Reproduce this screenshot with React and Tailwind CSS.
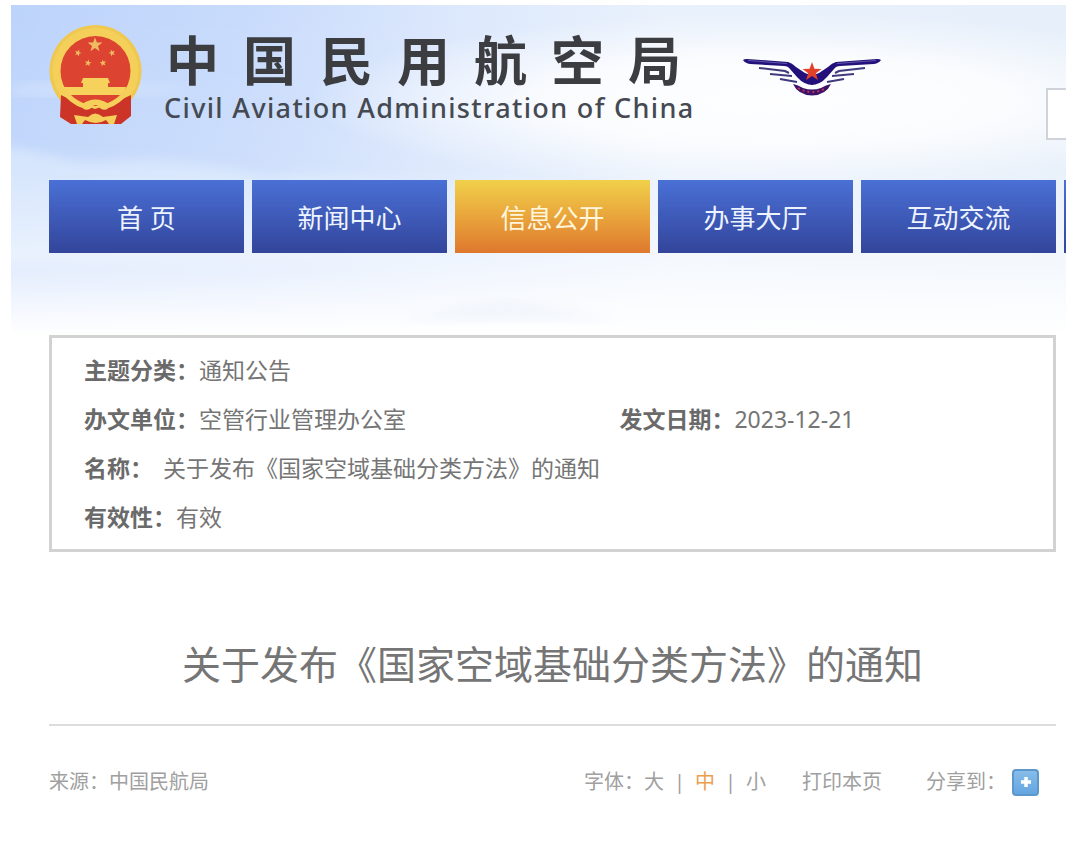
import { useState } from "react";

const navItems = [
  { label: "首 页" },
  { label: "新闻中心" },
  { label: "信息公开", active: true },
  { label: "办事大厅" },
  { label: "互动交流" },
];

const sizes = ["大", "中", "小"];

const noticeTitle = "关于发布《国家空域基础分类方法》的通知";

const star = "0,-10 2.4,-3.2 9.5,-3.1 3.8,1.2 5.9,8.1 0,4 -5.9,8.1 -3.8,1.2 -9.5,-3.1 -2.4,-3.2";

function SkyBackground() {
  return (
    <svg
      className="absolute inset-0 h-full w-full"
      viewBox="0 0 1055 332"
      preserveAspectRatio="none"
      aria-hidden="true"
    >
      <defs>
        <linearGradient id="sky" x1="0" y1="0" x2="1" y2="0">
          <stop offset="0" stopColor="#bcd3fb" />
          <stop offset="0.22" stopColor="#c8dbfc" />
          <stop offset="0.42" stopColor="#dce8fc" />
          <stop offset="0.62" stopColor="#e9f1fc" />
          <stop offset="1" stopColor="#e6effa" />
        </linearGradient>
        <linearGradient id="fade" x1="0" y1="0" x2="0" y2="1">
          <stop offset="0" stopColor="#fff" stopOpacity="0" />
          <stop offset="0.5" stopColor="#fff" stopOpacity="0.1" />
          <stop offset="0.78" stopColor="#fff" stopOpacity="0.55" />
          <stop offset="1" stopColor="#fff" />
        </linearGradient>
        <radialGradient id="glow">
          <stop offset="0" stopColor="#fff" stopOpacity="0.95" />
          <stop offset="0.5" stopColor="#fff" stopOpacity="0.8" />
          <stop offset="1" stopColor="#fff" stopOpacity="0" />
        </radialGradient>
        <filter id="soft">
          <feGaussianBlur stdDeviation="6" />
        </filter>
      </defs>
      <rect width="1055" height="332" fill="url(#sky)" />
      <ellipse cx="770" cy="96" rx="470" ry="88" fill="url(#glow)" />
      <path
        d="M-20 142 C20 142 50 158 92 158 C140 152 200 160 260 172 C340 168 400 176 480 190 L480 260 L-20 260Z"
        fill="#dceafd"
        opacity="0.7"
        filter="url(#soft)"
      />
      <path d="M0 82 Q70 72 190 84 Q90 96 0 90Z" fill="#d8e6fd" opacity="0.6" filter="url(#soft)" />
      <rect width="1055" height="332" fill="url(#fade)" />
      <path d="M390 318 Q440 300 500 296 Q560 306 610 318Z" fill="#edf3fb" opacity="0.6" filter="url(#soft)" />
    </svg>
  );
}

function Emblem() {
  return (
    <svg className="h-[100px] w-[93px] shrink-0" viewBox="0 0 93 100" role="img" aria-label="国徽">
      <circle cx="46.5" cy="46" r="46" fill="#efc850" />
      <circle cx="46.5" cy="46" r="43" fill="#f4d05a" />
      <path d="M12 70 L28 78 L46 84 L65 78 L82 70 L82 91 L72 99 H22 L11 92Z" fill="#cb3426" />
      <circle cx="46.5" cy="46" r="35" fill="#dc4330" />
      <g fill="#f0bc62">
        <polygon points={star} transform="translate(46 20) scale(0.78)" />
        <polygon points={star} transform="translate(29 28) rotate(20) scale(0.36)" />
        <polygon points={star} transform="translate(63 28) rotate(-20) scale(0.36)" />
        <polygon points={star} transform="translate(39 38) rotate(10) scale(0.36)" />
        <polygon points={star} transform="translate(54 38) rotate(-10) scale(0.36)" />
      </g>
      <path d="M34 53 H59 L61 58 H59 V62 H77 L75 70 H17 L15 62 H34 V58 H32Z" fill="#f6d25c" />
      <path
        d="M15 66 Q23 77 35 81 Q40 77 46.5 77 Q53 77 58 81 Q70 77 78 66"
        fill="none"
        stroke="#f5cf59"
        strokeWidth="5"
      />
      <path d="M35 82 Q39 84 42 80 Q46.5 76 51 80 Q54 84 58 82" fill="none" stroke="#f5cf59" strokeWidth="4" />
      <path
        d="M25 90 L39 92 Q46 85 54 92 L68 90 L65 99 H60 L57 95 Q47 101 36 95 L33 99 H28Z"
        fill="#f5cf59"
      />
    </svg>
  );
}

function Wings() {
  return (
    <svg className="h-[39px] w-[138px]" viewBox="0 0 138 39" role="img" aria-label="民航徽标">
      <path d="M50 26 Q55 27 60 30 Q69 33 78 30 Q83 27 88 26 Q83 37 69 37.5 Q55 37 50 26Z" fill="#3a1268" />
      <path d="M55 30 Q69 38 83 30" fill="none" stroke="#c0305a" strokeWidth="2" strokeDasharray="2 3" />
      {["", "translate(138 0) scale(-1 1)"].map((flip) => (
        <g key={flip} transform={flip}>
          <path
            d="M0 2 Q1 1 4 1 L45 4 Q49 5 53 9 L62 15 L70 18 V27 Q61 27 54 19 L47 11 Q45 8 41 8 L7 6 Q2 5 0 2Z"
            fill="#23107a"
          />
          <path d="M5 2.500 L44 5.500" fill="none" stroke="#6f6ab8" strokeWidth="0.8" />
          <g fill="none" stroke="#3f3a7c" strokeWidth="2">
            <path d="M16 10 L42 13 L46 15" />
            <path d="M27 16 L49 18" />
            <path d="M37 21 L54 24" />
          </g>
        </g>
      ))}
      <polygon points={star} transform="translate(69 14)" fill="#e2402b" />
    </svg>
  );
}

function InfoItem({ label, children, className = "" }) {
  return (
    <div className={`flex ${className}`}>
      <dt className="shrink-0 font-bold text-[#6a6a6a]">{label}：</dt>
      <dd>{children}</dd>
    </div>
  );
}

export default function App() {
  const [fontSize, setFontSize] = useState("中");

  return (
    <div className="bg-white pt-[5px] pr-3.5 pl-[11px] font-['Noto_Sans','Noto_Sans_CJK_SC',sans-serif] text-[#757575]">
      <header className="relative overflow-hidden pb-[82px] pl-[38px]">
        <SkyBackground />
        <div className="relative flex h-[175px] items-start pt-5">
          <Emblem />
          <div className="ml-[22px] pt-2">
            <h1 className="flex gap-6 pl-0.5 font-['Liberation_Sans','Noto_Sans_CJK_SC',sans-serif] text-[53px] leading-[60px] font-bold text-[#3b3d41]">
              {"中国民用航空局".split("").map((char) => (
                <span key={char}>{char}</span>
              ))}
            </h1>
            <p className="text-[27px] leading-[30px] font-medium tracking-wider whitespace-nowrap text-[#454a52]">
              Civil Aviation Administration of China
            </p>
          </div>
          <div className="mt-[33px] ml-12 shrink-0">
            <Wings />
          </div>
          <input
            type="text"
            aria-label="搜索"
            className="mt-[63px] ml-auto h-[52px] w-5 shrink-0 border-2 border-r-0 border-[#cfd2d8] bg-white"
          />
        </div>

        <nav className="relative flex gap-2">
          {navItems.map((item) => (
            <a
              key={item.label}
              href="#"
              className={`flex h-[73px] w-[195px] shrink-0 items-center justify-center bg-linear-to-b pt-1 text-[26px] ${
                item.active
                  ? "from-[#f0d04a] to-[#de782e] text-[#fff6dc]"
                  : "from-[#4a70d6] to-[#33459b] text-[#eef4ff]"
              }`}
            >
              {item.label}
            </a>
          ))}
          <span className="h-[73px] w-[195px] shrink-0 bg-linear-to-b from-[#4a70d6] to-[#33459b]" />
        </nav>
      </header>

      <main className="pr-2.5 pl-[38px]">
        <dl className="grid grid-cols-[4fr_3fr] border-3 border-[#d2d2d2] px-8 pt-2 pb-[7px] text-[23px] leading-[49px]">
          <InfoItem label="主题分类" className="col-span-2">
            通知公告
          </InfoItem>
          <InfoItem label="办文单位">空管行业管理办公室</InfoItem>
          <InfoItem label="发文日期">2023-12-21</InfoItem>
          <InfoItem label="名称" className="col-span-2 gap-2.5">
            {noticeTitle}
          </InfoItem>
          <InfoItem label="有效性" className="col-span-2">
            有效
          </InfoItem>
        </dl>

        <h2 className="border-b-2 border-[#dcdcdc] pt-[82px] pb-[30px] text-center text-[39px] leading-[60px]">
          {noticeTitle}
        </h2>

        <div className="flex items-center justify-between pt-[41px] pr-[17px] pb-14 text-[20px] leading-[30px] text-[#a0a0a0]">
          <p>来源：中国民航局</p>
          <div className="flex items-center">
            <span>字体：</span>
            {sizes.map((size, i) => (
              <span key={size} className="flex">
                {i > 0 && <span className="w-[31px] text-center">|</span>}
                <button
                  type="button"
                  onClick={() => setFontSize(size)}
                  className={fontSize === size ? "text-[#eba04e]" : ""}
                >
                  {size}
                </button>
              </span>
            ))}
            <button type="button" className="ml-9">
              打印本页
            </button>
            <span className="ml-11">分享到：</span>
            <button
              type="button"
              aria-label="分享"
              className="ml-1.5 flex size-[27px] items-center justify-center rounded-sm border-2 border-[#5d97cb] bg-linear-to-b from-[#86bdea] to-[#64a5e0]"
            >
              <svg className="size-3" viewBox="0 0 12 12" aria-hidden="true">
                <path d="M6 1 V11 M1 6 H11" stroke="#fff" strokeWidth="3.500" />
              </svg>
            </button>
          </div>
        </div>
      </main>
    </div>
  );
}
